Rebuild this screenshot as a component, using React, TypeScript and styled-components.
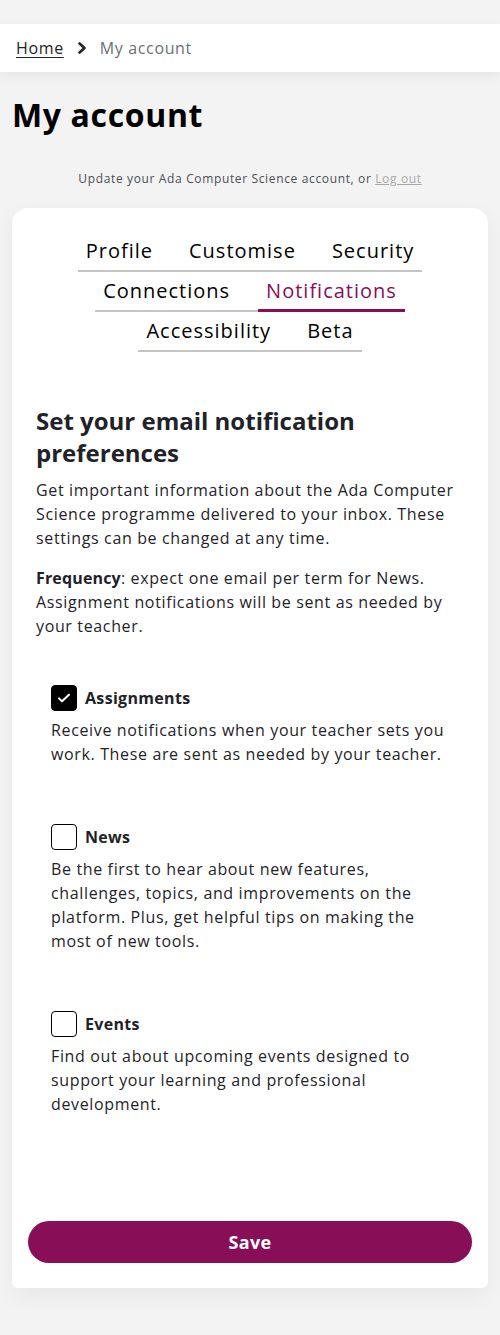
import React, { useState } from 'react';
import styled, { createGlobalStyle, css } from 'styled-components';

const purple = '#880e57';
const ink = '#1f2329';

const GlobalStyle = createGlobalStyle`
    html, body {
        margin: 0;
        padding: 0;
        background: #f3f3f3;
        font-family: "Open Sans", "Liberation Sans", sans-serif;
        color: ${ink};
        letter-spacing: 0.04em;
    }
    * { box-sizing: border-box; }
`;

const Page = styled.div`
    padding-top: 24px;
    padding-bottom: 48px;
`;

const Breadcrumbs = styled.nav`
    height: 48px;
    background: #fff;
    display: flex;
    align-items: center;
    padding: 0 16px;
    gap: 12px;
    font-size: 16px;
    box-shadow: 0 4px 12px rgba(0, 0, 0, 0.06);
`;

const Crumb = styled.a`
    color: #1f2329;
    text-decoration: underline;
    text-underline-offset: 3px;
`;

const Current = styled.span`
    color: #6a6f76;
`;

const PageTitle = styled.h1`
    margin: 23px 12px 0;
    font-size: 32px;
    line-height: 40px;
    font-weight: 700;
    color: #000;
    letter-spacing: 0.02em;
`;

const Subtitle = styled.p`
    margin: 36px 0 0;
    text-align: center;
    font-size: 12px;
    line-height: 16px;
    color: #4b4f55;

    a {
        color: #a9a9a9;
        text-decoration: underline;
    }
`;

const Card = styled.section`
    margin: 21px 12px 0;
    background: #fff;
    border-radius: 16px 16px 6px 6px;
    padding: 24px 16px 25px;
    box-shadow: 0 8px 24px rgba(0, 0, 0, 0.05);
`;

const TabRows = styled.div`
    display: flex;
    flex-direction: column;
    align-items: center;
`;

const TabRow = styled.div`
    display: flex;
    gap: 20px;
    border-bottom: 2px solid #c4c4c4;
`;

const Tab = styled.button<{ $active?: boolean }>`
    font-family: inherit;
    letter-spacing: 0.05em;
    background: none;
    border: none;
    padding: 0 8px;
    height: 40px;
    font-size: 20px;
    color: #000;
    cursor: pointer;
    margin-bottom: -2px;
    border-bottom: 3px solid transparent;
    ${({ $active }) =>
        $active &&
        css`
            color: ${purple};
            border-bottom-color: ${purple};
        `}
`;

const Content = styled.div`
    padding: 53px 8px 0;
`;

const Heading = styled.h2`
    margin: 0 0 9px;
    font-size: 24px;
    line-height: 32px;
    font-weight: 700;
    color: ${ink};
    letter-spacing: 0;
`;

const Para = styled.p`
    margin: 0 0 16px;
    font-size: 16px;
    line-height: 24px;
    color: ${ink};
`;

const Emph = styled.strong`
    font-weight: 700;
    letter-spacing: 0.01em;
`;

const Options = styled.div`
    padding: 31px 15px 0;
    display: flex;
    flex-direction: column;
    gap: 58px;
`;

const Option = styled.label`
    display: block;
    cursor: pointer;
`;

const OptionHead = styled.div`
    display: flex;
    align-items: center;
    gap: 8px;
    margin-bottom: 7px;
`;

const Box = styled.span<{ $checked: boolean }>`
    width: 26px;
    height: 26px;
    border-radius: 4px;
    border: 1.5px solid #000;
    background: ${({ $checked }) => ($checked ? '#000' : '#fff')};
    display: inline-flex;
    align-items: center;
    justify-content: center;
`;

const OptionLabel = styled.span`
    font-weight: 700;
    font-size: 16px;
    letter-spacing: 0.02em;
`;

const OptionText = styled.p`
    margin: 0;
    font-size: 16px;
    line-height: 24px;
`;

const SaveButton = styled.button`
    display: block;
    width: 100%;
    height: 42px;
    margin-top: 105px;
    border: none;
    border-radius: 21px;
    background: ${purple};
    color: #fff;
    font-family: inherit;
    font-size: 18px;
    font-weight: 700;
    letter-spacing: 0.02em;
    cursor: pointer;
`;

const tabRows = [
    ['Profile', 'Customise', 'Security'],
    ['Connections', 'Notifications'],
    ['Accessibility', 'Beta'],
];

const options = [
    {
        key: 'assignments',
        label: 'Assignments',
        text: 'Receive notifications when your teacher sets you work. These are sent as needed by your teacher.',
    },
    {
        key: 'news',
        label: 'News',
        text: 'Be the first to hear about new features, challenges, topics, and improvements on the platform. Plus, get helpful tips on making the most of new tools.',
    },
    {
        key: 'events',
        label: 'Events',
        text: 'Find out about upcoming events designed to support your learning and professional development.',
    },
];

const Check = () => (
    <svg width="16" height="16" viewBox="0 0 24 24" fill="none" stroke="#fff" strokeWidth="3" strokeLinecap="round" strokeLinejoin="round">
        <path d="M4.5 12.5l4.5 4.5L19.5 7" />
    </svg>
);

const Chevron = () => (
    <svg width="12" height="14" viewBox="0 0 12 14" fill="none" stroke="#1f2329" strokeWidth="2.6" strokeLinecap="round" strokeLinejoin="round">
        <path d="M3.5 2.5L8.5 7l-5 4.5" />
    </svg>
);

export default function App() {
    const [checked, setChecked] = useState<Record<string, boolean>>({ assignments: true });

    return (
        <Page>
            <GlobalStyle />
            <Breadcrumbs>
                <Crumb href="#">Home</Crumb>
                <Chevron />
                <Current>My account</Current>
            </Breadcrumbs>
            <PageTitle>My account</PageTitle>
            <Subtitle>
                Update your Ada Computer Science account, or <a href="#">Log out</a>
            </Subtitle>
            <Card>
                <TabRows>
                    {tabRows.map((row) => (
                        <TabRow key={row[0]}>
                            {row.map((t) => (
                                <Tab key={t} $active={t === 'Notifications'}>{t}</Tab>
                            ))}
                        </TabRow>
                    ))}
                </TabRows>
                <Content>
                    <Heading>Set your email notification preferences</Heading>
                    <Para>
                        Get important information about the Ada Computer Science programme delivered to your inbox. These settings can be changed at any time.
                    </Para>
                    <Para>
                        <Emph>Frequency</Emph>: expect one email per term for News. Assignment notifications will be sent as needed by your teacher.
                    </Para>
                    <Options>
                        {options.map((o) => (
                            <Option key={o.key} onClick={() => setChecked({ ...checked, [o.key]: !checked[o.key] })}>
                                <OptionHead>
                                    <Box $checked={!!checked[o.key]}>{checked[o.key] && <Check />}</Box>
                                    <OptionLabel>{o.label}</OptionLabel>
                                </OptionHead>
                                <OptionText>{o.text}</OptionText>
                            </Option>
                        ))}
                    </Options>
                </Content>
                <SaveButton>Save</SaveButton>
            </Card>
        </Page>
    );
}
